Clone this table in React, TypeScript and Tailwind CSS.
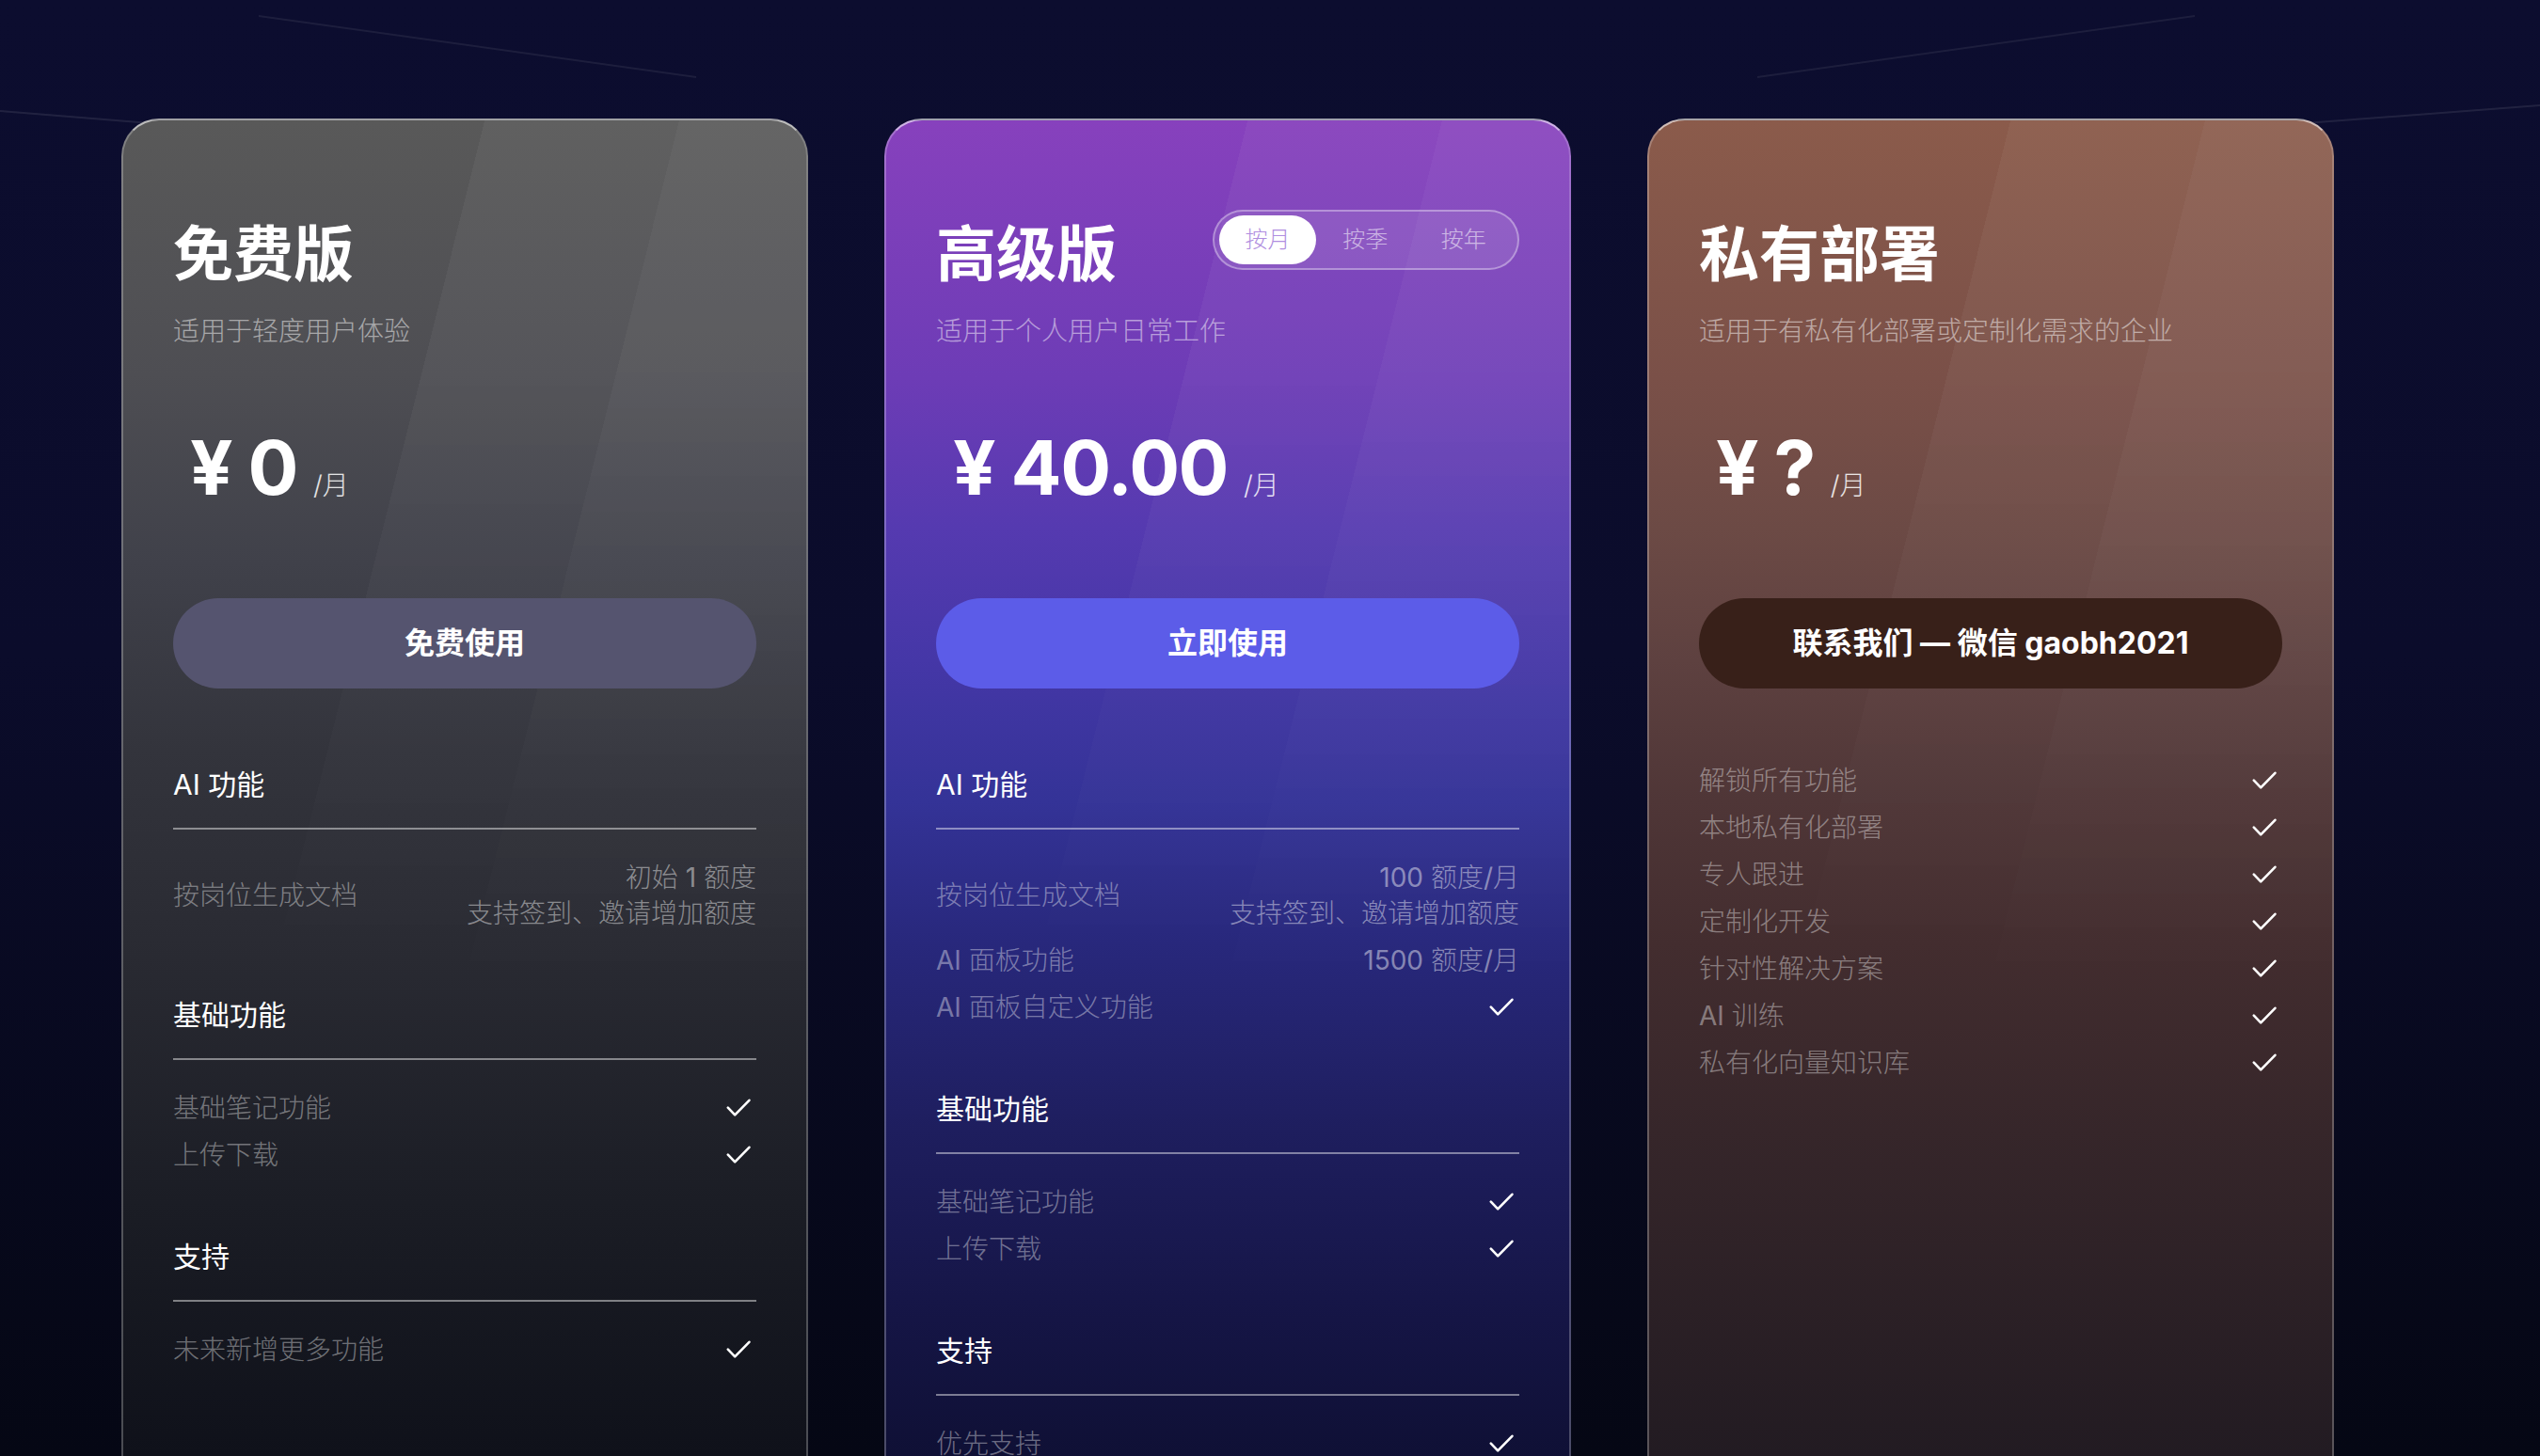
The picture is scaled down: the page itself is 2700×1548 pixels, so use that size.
import React from 'react';

type Row = { label: React.ReactNode; value?: React.ReactNode; lines?: boolean };
type Section = { title: string; rows: Row[] };

const Check: React.FC = () => (
  <svg width="26" height="20" viewBox="0 0 26 20" fill="none" className="mr-[6px] shrink-0">
    <path d="M1.8 9.6 L9.2 17.4 L24.4 1.8" stroke="white" strokeWidth="2.6" strokeLinecap="round" strokeLinejoin="round" />
  </svg>
);

const FeatureRow: React.FC<{ row: Row }> = ({ row }) => (
  <div className={`flex items-center justify-between ${row.lines ? 'py-[6px]' : 'min-h-[50px]'}`}>
    <span className="text-[28px] leading-[38px] font-light text-white/40">{row.label}</span>
    {row.value ? (
      <div className="text-right text-[28px] leading-[38px] font-light text-white/45">{row.value}</div>
    ) : (
      <Check />
    )}
  </div>
);

const Sections: React.FC<{ sections: Section[] }> = ({ sections }) => (
  <div className="mt-[82px] flex flex-col gap-[63px]">
    {sections.map((s) => (
      <div key={s.title}>
        <h3 className="text-[30px] leading-[40px] text-white">{s.title}</h3>
        <div className="mt-[26px] h-[2px] bg-white/45" />
        <div className="pt-[26px]">
          {s.rows.map((r, i) => (
            <FeatureRow key={i} row={r} />
          ))}
        </div>
      </div>
    ))}
  </div>
);

const Sheen: React.FC = () => (
  <div className="pointer-events-none absolute inset-x-0 top-0 h-[1000px] bg-[linear-gradient(104deg,transparent_39.4%,rgba(255,255,255,0.045)_39.4%,rgba(255,255,255,0.045)_60.6%,rgba(255,255,255,0.075)_60.6%)] [mask-image:linear-gradient(180deg,black_0%,black_25%,transparent_95%)]" />
);

interface CardProps {
  title: string;
  subtitle: string;
  price: string;
  cta: React.ReactNode;
  bg: string;
  btn: string;
  toggle?: React.ReactNode;
  children: React.ReactNode;
}

const PlanCard: React.FC<CardProps> = ({ title, subtitle, price, cta, bg, btn, toggle, children }) => (
  <div className={`relative h-[1500px] w-[730px] shrink-0 overflow-hidden rounded-[40px] border-2 border-white/25 border-t-white/60 ${bg}`}>
    <Sheen />
    <div className="relative px-[53px] pt-[95px]">
      <div className="flex items-start justify-between">
        <h2 className="mt-[15px] text-[64px] leading-[64px] font-bold text-white">{title}</h2>
        {toggle}
      </div>
      <p className="mt-[36px] text-[28px] leading-[28px] font-light text-white/50">{subtitle}</p>
      <div className="mt-[91px] flex items-baseline pl-[18px] text-white">
        <span className="text-[80px] leading-[80px] font-bold tracking-[-1.5px]">{price}</span>
        <span className="ml-[17px] text-[28px] font-light text-white/85">/月</span>
      </div>
      <button className={`mt-[99px] flex h-[96px] w-full items-center justify-center rounded-full text-[32px] font-bold text-white ${btn}`}>
        {cta}
      </button>
      {children}
    </div>
  </div>
);

const PeriodToggle: React.FC = () => (
  <div className="flex h-[64px] w-[326px] items-center rounded-full border-2 border-white/35 bg-white/10 px-[5px]">
    <div className="flex h-[52px] w-[103px] items-center justify-center rounded-full bg-white text-[24px] font-light text-[#b08ee0]">
      按月
    </div>
    <div className="flex flex-1 justify-center text-[24px] font-light text-white/55">按季</div>
    <div className="flex flex-1 justify-center text-[24px] font-light text-white/55">按年</div>
  </div>
);

const quota = (n: string) => (
  <>
    <span className="font-normal">{n}</span> 额度<span className="font-normal">/</span>月
  </>
);

const freeSections: Section[] = [
  {
    title: 'AI 功能',
    rows: [
      {
        label: '按岗位生成文档',
        lines: true,
        value: (
          <>
            <div>
              初始 <span className="font-normal">1</span> 额度
            </div>
            <div>支持签到、邀请增加额度</div>
          </>
        ),
      },
    ],
  },
  { title: '基础功能', rows: [{ label: '基础笔记功能' }, { label: '上传下载' }] },
  { title: '支持', rows: [{ label: '未来新增更多功能' }] },
];

const proSections: Section[] = [
  {
    title: 'AI 功能',
    rows: [
      {
        label: '按岗位生成文档',
        lines: true,
        value: (
          <>
            <div>{quota('100')}</div>
            <div>支持签到、邀请增加额度</div>
          </>
        ),
      },
      { label: <><span className="font-normal">AI</span> 面板功能</>, value: quota('1500') },
      { label: <><span className="font-normal">AI</span> 面板自定义功能</> },
    ],
  },
  { title: '基础功能', rows: [{ label: '基础笔记功能' }, { label: '上传下载' }] },
  { title: '支持', rows: [{ label: '优先支持' }] },
];

const privateRows: Row[] = [
  { label: '解锁所有功能' },
  { label: '本地私有化部署' },
  { label: '专人跟进' },
  { label: '定制化开发' },
  { label: '针对性解决方案' },
  { label: <><span className="font-normal">AI</span> 训练</> },
  { label: '私有化向量知识库' },
];

const BgLines: React.FC = () => (
  <svg className="pointer-events-none absolute inset-0" width="2700" height="1548" viewBox="0 0 2700 1548" fill="none">
    <line x1="275" y1="17" x2="740" y2="82" stroke="rgba(255,255,255,0.07)" strokeWidth="2" />
    <line x1="2333" y1="17" x2="1868" y2="82" stroke="rgba(255,255,255,0.07)" strokeWidth="2" />
    <line x1="0" y1="118" x2="160" y2="131" stroke="rgba(255,255,255,0.09)" strokeWidth="2" />
    <line x1="2700" y1="112" x2="2450" y2="131" stroke="rgba(255,255,255,0.09)" strokeWidth="2" />
  </svg>
);

export default function App() {
  return (
    <div className="relative h-[1548px] w-[2700px] overflow-hidden bg-[linear-gradient(180deg,#0c0d2f_0%,#0b0c2b_45%,#050714_100%)] font-['Inter','Noto_Sans_CJK_SC',sans-serif]">
      <BgLines />
      <div className="relative flex gap-[81px] pl-[129px] pt-[126px]">
        <PlanCard
          title="免费版"
          subtitle="适用于轻度用户体验"
          price="¥ 0"
          cta="免费使用"
          bg="bg-[linear-gradient(180deg,#595959_0px,#4e4e53_270px,#40414a_470px,#33343c_670px,#2a2b33_870px,#1a1c24_1170px,#0f111a_1420px)]"
          btn="bg-[#55546f]"
        >
          <Sections sections={freeSections} />
        </PlanCard>

        <PlanCard
          title="高级版"
          subtitle="适用于个人用户日常工作"
          price="¥ 40.00"
          cta="立即使用"
          toggle={<PeriodToggle />}
          bg="bg-[linear-gradient(180deg,#8741bd_0px,#6d3cb6_274px,#553ab0_434px,#4537a7_574px,#343397_724px,#28287c_874px,#1e1e5e_1074px,#151545_1274px,#0f1035_1422px)]"
          btn="bg-[#5c5ce8]"
        >
          <Sections sections={proSections} />
        </PlanCard>

        <PlanCard
          title="私有部署"
          subtitle="适用于有私有化部署或定制化需求的企业"
          price="¥ ?"
          cta={<>联系我们 — 微信 gaobh2021</>}
          bg="bg-[linear-gradient(180deg,#8b5b4b_0px,#7a5048_274px,#6c4a45_434px,#5e4140_574px,#4f3637_724px,#432d2f_874px,#36262a_1074px,#221b22_1422px)]"
          btn="bg-[#382019]"
        >
          <div className="mt-[73px]">
            {privateRows.map((r, i) => (
              <FeatureRow key={i} row={r} />
            ))}
          </div>
        </PlanCard>
      </div>
    </div>
  );
}
